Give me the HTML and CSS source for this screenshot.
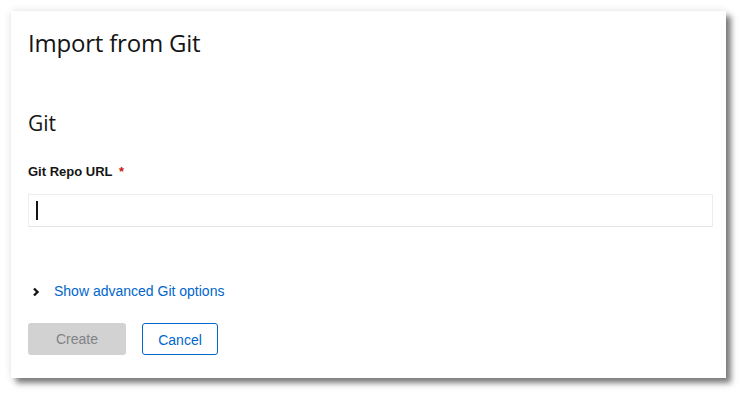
FILE: index.html
```html
<!DOCTYPE html>
<html>
<head>
<meta charset="utf-8">
<link rel="stylesheet" href="styles.css">
</head>
<body>
<div class="card">
  <h1 class="title">Import from Git</h1>
  <h2 class="section">Git</h2>
  <label class="label">Git Repo URL <span class="req">*</span></label>
  <div class="input"><span class="caret"></span></div>
  <div class="advanced">
    <svg class="chev" width="8" height="10" viewBox="0 0 8 10"><polyline points="2,1.5 5.5,5 2,8.5" fill="none" stroke="#151515" stroke-width="2.4"/></svg>
    <span class="link">Show advanced Git options</span>
  </div>
  <div class="actions">
    <button class="btn btn-create">Create</button>
    <button class="btn btn-cancel">Cancel</button>
  </div>
</div>
</body>
</html>
```
FILE: styles.css
```css
html, body {
  margin: 0;
  padding: 0;
  background: #ffffff;
}
body {
  font-family: "Liberation Sans", Arial, sans-serif;
  color: #151515;
  min-height: 398px;
  padding-top: 11px;
  padding-left: 11px;
  box-sizing: border-box;
}
.card {
  width: 715px;
  height: 367px;
  box-sizing: border-box;
  padding: 16px 13px 0 17px;
  background: #fff;
  box-shadow: 0 0 8px rgba(0,0,0,0.10), 5px 5px 6px rgba(0,0,0,0.5);
  display: flex;
  flex-direction: column;
  align-items: flex-start;
}
.title {
  margin: 0;
  font-family: "Open Sans", sans-serif;
  font-size: 24px;
  font-weight: 400;
  line-height: 31px;
  letter-spacing: -0.2px;
}
.section {
  margin: 52px 0 0 0;
  font-family: "Open Sans", sans-serif;
  font-size: 21px;
  font-weight: 400;
  line-height: 26px;
}
.label {
  margin-top: 25px;
  font-size: 13px;
  font-weight: 700;
  line-height: 21px;
}
.req {
  color: #c9190b;
  margin-left: 3px;
}
.input {
  margin-top: 12px;
  align-self: stretch;
  height: 33px;
  box-sizing: border-box;
  border: 1px solid #ededed;
  border-bottom-color: #e4e4e4;
  display: flex;
  align-items: center;
  padding-left: 7px;
}
.caret {
  width: 1.5px;
  height: 19px;
  background: #151515;
}
.advanced {
  margin-top: 54px;
  display: flex;
  align-items: center;
  gap: 14px;
  padding-left: 4px;
  line-height: 21px;
}
.chev {
  display: block;
}
.link {
  color: #0066cc;
  font-size: 14px;
}
.actions {
  margin-top: 21px;
  display: flex;
  gap: 16px;
}
.btn {
  font-family: inherit;
  font-size: 14px;
  height: 32px;
  border-radius: 3px;
  padding: 0 0 0 0;
  margin: 0;
  line-height: 32px;
}
.btn-create {
  width: 98px;
  background: #d2d2d2;
  color: #808285;
  border: none;
}
.btn-cancel {
  width: 76px;
  background: #fff;
  color: #0066cc;
  border: 1px solid #0066cc;
}
```
